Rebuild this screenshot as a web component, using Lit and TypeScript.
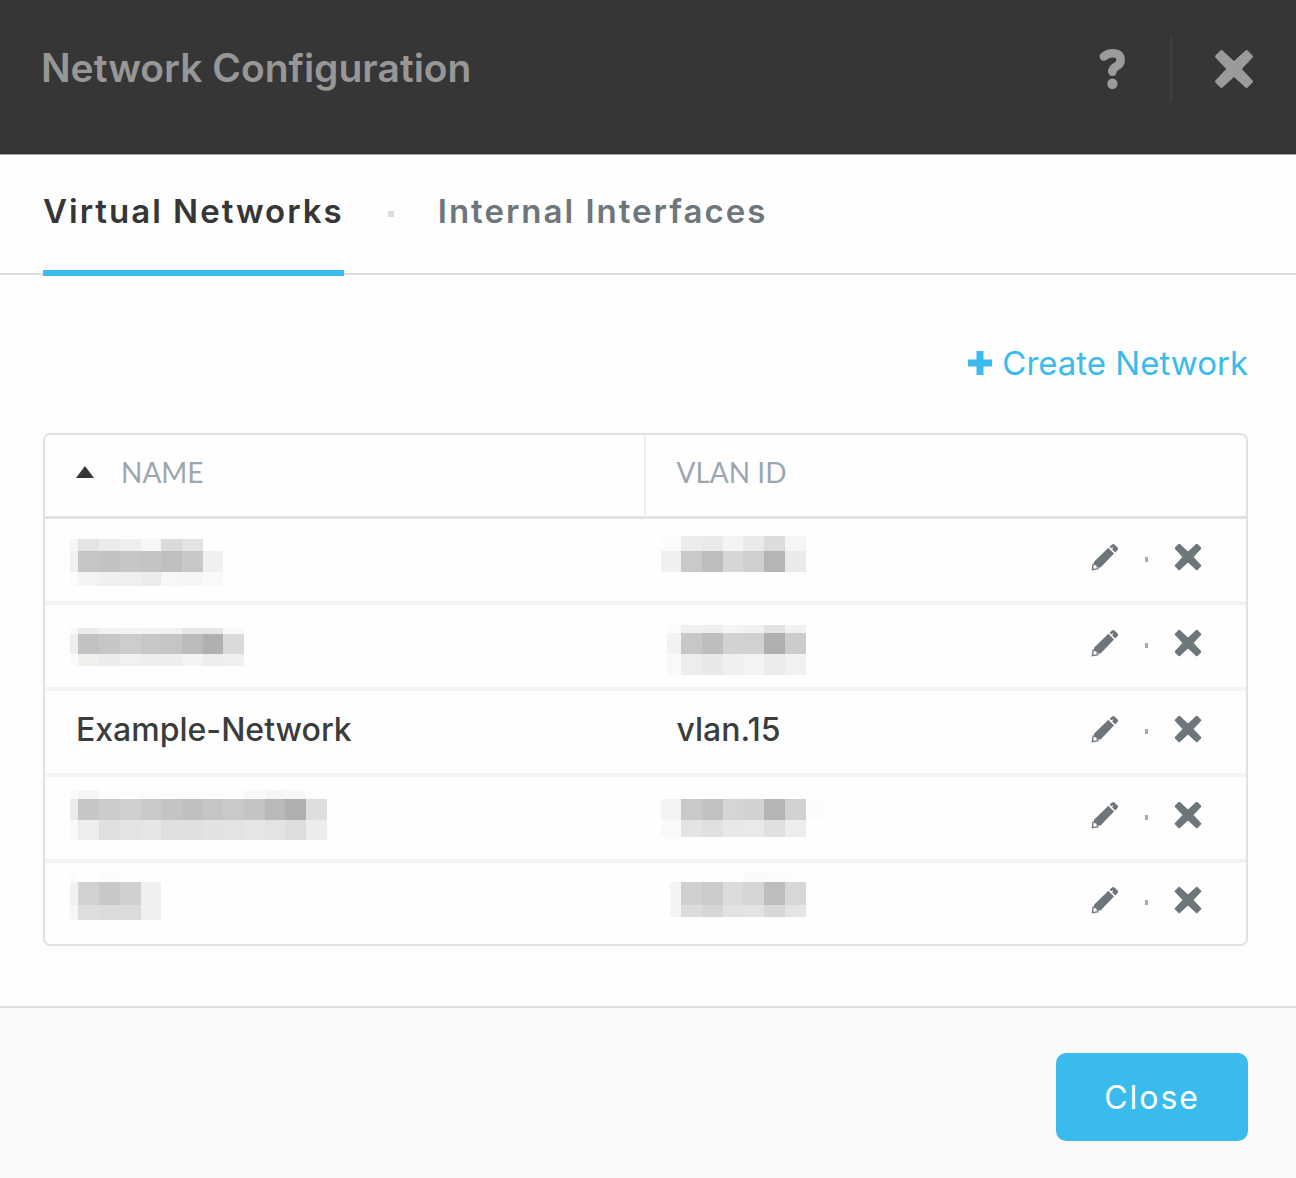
import { LitElement, html, svg, css, nothing } from "lit";
import { customElement, property, state } from "lit/decorators.js";

/** Greyscale mosaic covering a hidden value. Edges are in pixels from the row's top left. */
interface Mosaic {
  columns: number[];
  lines: number[];
  shades: string[];
}

interface Network {
  name: string | Mosaic;
  vlan: string | Mosaic;
}

const NAME_EDGES = [0, 8, 29, 50, 71, 91, 112, 133, 153, 174, 195, 215, 236, 257, 288];
const vlanEdges = (start: number) => [start, 20, 41, 62, 82, 103, 124, 145, 163];

const NETWORKS: Network[] = [
  {
    name: {
      columns: NAME_EDGES,
      lines: [20, 32, 53, 67],
      shades: [
        "f6 e4 ec ee f6 da e3 fe fe",
        "f0 c5 c2 c6 c3 bf c8 f0",
        "fb f3 f0 eef0ef eb f7 f5 f9 fd",
      ],
    },
    vlan: {
      columns: vlanEdges(0),
      lines: [17, 32, 53],
      shades: ["fc ec ea f4f4f2 ea dadddc f5", "f0 c9 bd d6 cf b5 ea"],
    },
  },
  {
    name: {
      columns: NAME_EDGES,
      lines: [23, 29, 49, 61],
      shades: [
        "f9 eb f2 f3 f2 f0 e6 e6 f9",
        "ee c2 c6 cd c7 c5 bb b0 da",
        "fa f0f0ed ec f1 ee ee f3 ed f0",
      ],
    },
    vlan: {
      columns: vlanEdges(6),
      lines: [20, 28, 49, 70],
      shades: [
        "fb f0 ee f4 f0 e2e4e3 f1",
        "f2 c7c7ca be d2 d1 adb0af cc",
        "f9 ed e8 f0 f3 eb f1 fe",
      ],
    },
  },
  { name: "Example-Network", vlan: "vlan.15" },
  {
    name: {
      columns: NAME_EDGES,
      lines: [13, 22, 43, 63],
      shades: [
        "fb f6 fd fd fc fc fc fd fe f9 f6 f8 fd fd",
        "eb c6 cb d0 c9 c2c5c4 c0 c5 c9 c4 b9 af de",
        "f9 ed e0 e1e4e3 e4e7e6 df e0 e2 e3 e6 e3 dd ebedec",
      ],
    },
    vlan: {
      columns: vlanEdges(0),
      lines: [22, 43, 60],
      shades: ["f4 c9 c1 d5 d2 b5 cfd2d1 fc", "f9 e4 dee1e0 e8 e9 e0 ed fe"],
    },
  },
  {
    name: {
      columns: NAME_EDGES,
      lines: [10, 19, 42, 57],
      shades: ["fb fe fc fe fe", "f1 cfd2d1 c8 d0 f0", "f6 dd db db f0"],
    },
    vlan: {
      columns: vlanEdges(9),
      lines: [10, 19, 42, 54],
      shades: [
        "fe fe fe fe fa fb fd",
        "f4 d0 c9cccb db d5 bbbebd d5d8d7",
        "f5 dc d4d7d6 e2 e3 d6d9d8 e4",
      ],
    },
  },
];

const cross = (size: number) => html`
  <svg width=${size} height=${size} viewBox="0 0 40 40" aria-hidden="true">
    <path
      d="M7.5 2.5 L20 14.2 L32.5 2.5 L37.5 7.5 L25.8 20 L37.5 32.5 L32.5 37.5 L20 25.8 L7.5 37.5 L2.5 32.5 L14.2 20 L2.5 7.5 Z"
      fill="currentColor" stroke="currentColor" stroke-width="3" stroke-linejoin="round" />
  </svg>`;

const pencil = html`
  <svg width="28" height="28" viewBox="0 0 28 28" aria-hidden="true">
    <path d="M17.4 4.8 L23 10.4 L9.6 24.6 L5.6 24.8 L5.4 22.4 L3 22 L3 18.8 Z" fill="currentColor" />
    <path d="M18.6 3.8 L21 1.4 Q22.2 0.4 23.4 1.4 L26.6 4.6 Q27.6 5.8 26.6 7 L24.2 9.4 Z" fill="currentColor" />
    <path d="M2.2 20.4 L1.4 26.6 L7.6 25.6" fill="none" stroke="currentColor" stroke-width="1.4" />
    <path d="M19.2 7 L21.8 4.8" stroke="#fefefe" stroke-width="1.2" />
  </svg>`;

@customElement("redacted-value")
class RedactedValue extends LitElement {
  @property({ attribute: false }) mosaic!: Mosaic;

  static styles = css`
    :host { display: block; }
    svg { display: block; }
  `;

  render() {
    const { columns, lines, shades } = this.mosaic;
    const width = columns[columns.length - 1];
    return html`
      <svg width=${width} height="81" viewBox="0 0 ${width} 81" role="img" aria-label="Hidden">
        ${shades.map((line, r) =>
          line.split(" ").map((shade, c) => svg`
            <rect x=${columns[c]} y=${lines[r]}
              width=${columns[c + 1] - columns[c]} height=${lines[r + 1] - lines[r]}
              fill=${"#" + (shade.length === 2 ? shade.repeat(3) : shade)} />`)
        )}
      </svg>`;
  }
}

@customElement("network-table")
class NetworkTable extends LitElement {
  @property({ attribute: false }) networks: Network[] = [];

  static styles = css`
    :host {
      display: block;
      border: 2px solid #dee2e4;
      border-radius: 7px;
    }
    .table {
      width: 100%;
      table-layout: fixed;
      border-collapse: separate;
      border-spacing: 0;
    }
    .col-name { width: 50%; }
    .col-vlan { width: 30%; }
    .head {
      height: 73px;
      padding: 0 0 8px 31px;
      box-sizing: content-box;
      border-bottom: 3px solid #dfe2e5;
      font-family: Lato, sans-serif;
      font-size: 28px;
      font-weight: 400;
      line-height: 34px;
      text-align: left;
      color: #9ba7ae;
    }
    .head-name { border-right: 2px solid #eceff0; }
    .sort {
      display: flex;
      align-items: center;
      gap: 27px;
      padding: 0;
      border: 0;
      background: none;
      font: inherit;
      color: inherit;
    }
    .sort svg { display: block; color: #353635; }
    .cell {
      height: 82px;
      padding: 0 0 0 31px;
      border-bottom: 4px solid #f2f3f5;
      font-size: 32px;
      font-weight: 500;
      line-height: 40px;
      color: #3b3d3d;
      vertical-align: middle;
    }
    .value { padding-bottom: 4px; height: 78px; }
    .row:last-child .cell { height: 81px; border-bottom: 0; }
    .hidden { vertical-align: top; }
    .hidden-name { padding-left: 25px; }
    .hidden-vlan { padding-left: 15px; }
    .actions {
      display: flex;
      justify-content: flex-end;
      align-items: center;
      gap: 26px;
      padding-right: 44px;
      padding-bottom: 7px;
    }
    .dot { width: 3px; height: 5px; margin-top: 5px; background: #a5abaf; }
    .icon {
      padding: 0;
      border: 0;
      background: none;
      color: #6d767b;
    }
    .icon svg { display: block; }
  `;

  private cell(value: string | Mosaic, kind: string) {
    return typeof value === "string"
      ? html`<td class="cell value">${value}</td>`
      : html`<td class="cell hidden hidden-${kind}"><redacted-value .mosaic=${value}></redacted-value></td>`;
  }

  render() {
    return html`
      <table class="table">
        <colgroup><col class="col-name" /><col class="col-vlan" /><col /></colgroup>
        <thead>
          <tr>
            <th class="head head-name" scope="col" aria-sort="ascending">
              <button class="sort" type="button">
                <svg width="18" height="12" viewBox="0 0 18 12" aria-hidden="true">
                  <path d="M9 0 L18 12 H0 Z" fill="currentColor" />
                </svg>
                NAME
              </button>
            </th>
            <th class="head" scope="col">VLAN ID</th>
            <td class="head"></td>
          </tr>
        </thead>
        <tbody>
          ${this.networks.map((network) => html`
            <tr class="row">
              ${this.cell(network.name, "name")}
              ${this.cell(network.vlan, "vlan")}
              <td class="cell">
                <div class="actions">
                  <button class="icon" type="button" aria-label="Edit">${pencil}</button>
                  <span class="dot"></span>
                  <button class="icon" type="button" aria-label="Delete">${cross(28)}</button>
                </div>
              </td>
            </tr>`)}
        </tbody>
      </table>`;
  }
}

@customElement("app-root")
class AppRoot extends LitElement {
  @state() private active = 0;

  static styles = css`
    :host {
      display: flex;
      flex-direction: column;
      min-height: 100vh;
      background: #fefefe;
      font-family: Inter, "Open Sans", sans-serif;
    }
    button { font-family: inherit; cursor: pointer; }
    .header {
      display: flex;
      align-items: center;
      justify-content: space-between;
      padding: 37px 42px 53px 41px;
      border-bottom: 1px solid #a0a0a0;
      background: #353635;
      color: #979797;
    }
    .title {
      margin: 0;
      padding-bottom: 2px;
      font-size: 39px;
      font-weight: 600;
      line-height: 62px;
    }
    .tools { display: flex; align-items: center; }
    .tool { padding: 0; border: 0; background: none; color: #9b9b9b; }
    .tool svg { display: block; }
    .rule { width: 2px; height: 64px; margin: 0 42px 0 43px; background: #3f4042; }
    .tabs {
      display: flex;
      align-items: flex-start;
      padding: 0 43px;
      border-bottom: 2px solid #dadee1;
    }
    .tab {
      height: 121px;
      margin-bottom: -3px;
      padding: 0 0 4px;
      border: 0;
      border-bottom: 6px solid transparent;
      background: none;
      font-size: 33px;
      font-weight: 600;
      letter-spacing: 2px;
      line-height: 40px;
      color: #6d767b;
    }
    .tab[aria-selected="true"] { border-bottom-color: #39bbed; color: #353635; }
    .tab-dot { width: 6px; height: 6px; margin: 56px 44px 0; background: #d8dcdf; }
    .body {
      display: flex;
      flex-direction: column;
      flex: 1;
      padding: 68px 48px 60px 43px;
    }
    .create {
      display: flex;
      align-items: center;
      align-self: flex-end;
      gap: 10px;
      margin-bottom: 50px;
      padding: 0;
      border: 0;
      background: none;
      font-size: 33px;
      line-height: 40px;
      color: #39bbed;
    }
    .create svg { display: block; }
    .footer {
      display: flex;
      justify-content: flex-end;
      padding: 45px 48px 37px;
      border-top: 2px solid #dddfe2;
      background: #f9f9f9;
    }
    .close {
      padding: 25px 48px 23px;
      border: 0;
      border-radius: 10px;
      background: #39bbed;
      font-size: 32px;
      letter-spacing: 2px;
      line-height: 40px;
      color: #fff;
    }
  `;

  render() {
    const tabs = ["Virtual Networks", "Internal Interfaces"];
    return html`
      <header class="header">
        <h1 class="title">Network Configuration</h1>
        <div class="tools">
          <button class="tool" type="button" aria-label="Help">
            <svg width="28" height="44" viewBox="0 0 28 44" aria-hidden="true">
              <path d="M4.5 9.6 Q9 6.2 13.5 6.2 Q21.6 6.2 21.6 13 Q21.6 17 17.5 19.3 Q13.4 21.2 13.4 24.6"
                fill="none" stroke="currentColor" stroke-width="8.6" stroke-linejoin="round" />
              <circle cx="13.4" cy="24.6" r="4.3" fill="currentColor" />
              <circle cx="4.8" cy="9.6" r="4.2" fill="currentColor" />
              <circle cx="13.4" cy="36.8" r="5.2" fill="currentColor" />
            </svg>
          </button>
          <span class="rule"></span>
          <button class="tool" type="button" aria-label="Dismiss">${cross(40)}</button>
        </div>
      </header>
      <nav class="tabs" role="tablist">
        ${tabs.map((label, i) => html`
          ${i ? html`<span class="tab-dot"></span>` : nothing}
          <button class="tab" type="button" role="tab" aria-selected=${this.active === i ? "true" : "false"}
            @click=${() => (this.active = i)}>${label}</button>`)}
      </nav>
      <main class="body">
        <button class="create" type="button">
          <svg width="24" height="24" viewBox="0 0 24 24" aria-hidden="true">
            <path d="M12 0 V24 M0 12 H24" stroke="currentColor" stroke-width="7" />
          </svg>
          Create Network
        </button>
        <network-table .networks=${NETWORKS}></network-table>
      </main>
      <footer class="footer">
        <button class="close" type="button">Close</button>
      </footer>`;
  }
}
